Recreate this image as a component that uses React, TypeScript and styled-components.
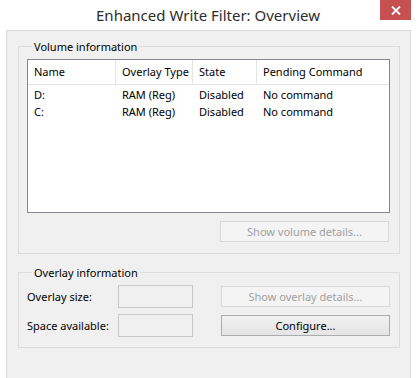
import React from 'react';
import styled, { createGlobalStyle } from 'styled-components';

const GlobalStyle = createGlobalStyle`
  html, body {
    margin: 0;
    padding: 0;
    background: #ffffff;
  }
  body {
    font-family: "Noto Sans", "Liberation Sans", sans-serif;
    font-size: 11px;
    color: #000;
  }
`;

const Window = styled.div`
  width: 418px;
  height: 378px;
  display: flex;
  flex-direction: column;
  background: #ffffff;
  overflow: hidden;
`;

const TitleBar = styled.div`
  height: 30px;
  display: grid;
  grid-template-columns: 1fr auto 1fr;
  align-items: start;
`;

const Title = styled.div`
  grid-column: 2;
  font-size: 15px;
  line-height: 30px;
  color: #2e2e2e;
  padding-right: 2px;
`;

const CloseButton = styled.div`
  grid-column: 3;
  justify-self: end;
  width: 31px;
  height: 20px;
  margin-right: 7px;
  background: #c75050;
  display: flex;
  align-items: center;
  justify-content: center;
`;

const Client = styled.div`
  flex: 1;
  margin: 0 7px 0 6px;
  border: 1px solid #dadada;
  border-bottom: none;
  background: #f0f0f0;
  padding: 8px 10px 0 11px;
  display: flex;
  flex-direction: column;
  gap: 11px;
`;

const Group = styled.fieldset<{ $bottom: number }>`
  margin: 0;
  border: 1px solid #dcdcdc;
  padding: 5px 9px ${p => p.$bottom}px 8px;
  min-width: 0;
`;

const Legend = styled.legend`
  padding: 0 2px;
  margin-left: 5px;
  line-height: 15px;
  color: #000;
`;

const ListView = styled.div`
  height: 152px;
  border: 1px solid #828790;
  background: #ffffff;
`;

const HeaderRow = styled.div`
  display: grid;
  grid-template-columns: 88px 77px 64px 1fr;
  height: 24px;
  border-bottom: 1px solid #e5e5e5;
`;

const HeaderCell = styled.div<{ $last?: boolean }>`
  padding-left: 6px;
  line-height: 23px;
  border-right: ${p => (p.$last ? 'none' : '1px solid #e5e5e5')};
  color: #000;
  white-space: nowrap;
`;

const Rows = styled.div`
  padding-top: 1px;
`;

const Row = styled.div`
  display: grid;
  grid-template-columns: 88px 77px 64px 1fr;
  height: 17px;
`;

const Cell = styled.div`
  padding-left: 6px;
  line-height: 17px;
  white-space: nowrap;
`;

const ButtonBar = styled.div`
  display: flex;
  justify-content: flex-end;
  margin-top: 8px;
  padding-right: 1px;
`;

const Button = styled.div<{ $disabled?: boolean }>`
  width: 169px;
  height: 21px;
  box-sizing: border-box;
  display: flex;
  align-items: center;
  justify-content: center;
  border: 1px solid ${p => (p.$disabled ? '#d9d9d9' : '#acacac')};
  background: ${p =>
    p.$disabled ? '#f4f4f4' : 'linear-gradient(#f0f0f0, #e5e5e5)'};
  color: ${p => (p.$disabled ? '#a0a0a0' : '#000')};
`;

const OverlayGrid = styled.div`
  display: grid;
  grid-template-columns: 91px 75px 1fr;
  grid-auto-rows: 23px;
  row-gap: 6px;
  align-items: center;
`;

const FieldLabel = styled.div`
  white-space: nowrap;
`;

const TextBox = styled.div`
  height: 23px;
  box-sizing: border-box;
  border: 1px solid #c8c8c8;
  background: #f0f0f0;
`;

const ButtonCell = styled.div`
  display: flex;
  justify-content: flex-end;
`;

const columns = ['Name', 'Overlay Type', 'State', 'Pending Command'];
const volumes = [
  ['D:', 'RAM (Reg)', 'Disabled', 'No command'],
  ['C:', 'RAM (Reg)', 'Disabled', 'No command'],
];

export default function App() {
  return (
    <Window>
      <GlobalStyle />
      <TitleBar>
        <Title>Enhanced Write Filter: Overview</Title>
        <CloseButton>
          <svg width="10" height="9" viewBox="0 0 10 9">
            <path d="M1 0.5 L9 8.5 M9 0.5 L1 8.5" stroke="#fff" strokeWidth="1.8" />
          </svg>
        </CloseButton>
      </TitleBar>
      <Client>
        <Group $bottom={11}>
          <Legend>Volume information</Legend>
          <ListView>
            <HeaderRow>
              {columns.map((c, i) => (
                <HeaderCell key={c} $last={i === columns.length - 1}>
                  {c}
                </HeaderCell>
              ))}
            </HeaderRow>
            <Rows>
              {volumes.map(v => (
                <Row key={v[0]}>
                  {v.map((c, i) => (
                    <Cell key={i}>{c}</Cell>
                  ))}
                </Row>
              ))}
            </Rows>
          </ListView>
          <ButtonBar>
            <Button $disabled>Show volume details...</Button>
          </ButtonBar>
        </Group>
        <Group $bottom={10}>
          <Legend>Overlay information</Legend>
          <OverlayGrid>
            <FieldLabel>Overlay size:</FieldLabel>
            <TextBox />
            <ButtonCell>
              <Button $disabled>Show overlay details...</Button>
            </ButtonCell>
            <FieldLabel>Space available:</FieldLabel>
            <TextBox />
            <ButtonCell>
              <Button>Configure...</Button>
            </ButtonCell>
          </OverlayGrid>
        </Group>
      </Client>
    </Window>
  );
}
